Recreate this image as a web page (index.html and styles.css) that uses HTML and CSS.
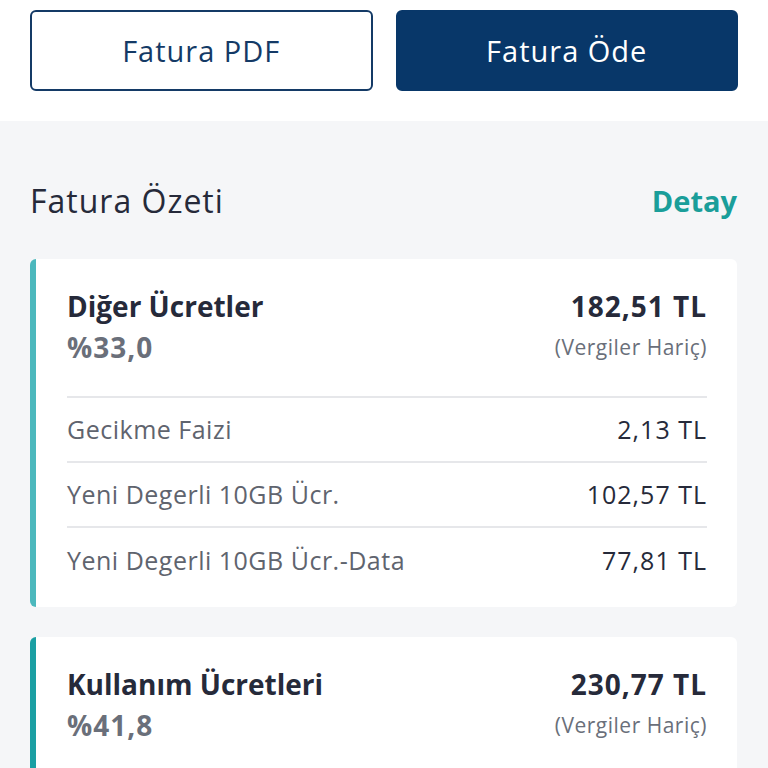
FILE: index.html
```html
<!DOCTYPE html>
<html>
    <head>
        <meta charset="utf-8">
        <link rel="stylesheet" href="styles.css">
    </head>
    <body>
        <div class="actions">
            <button class="btn btn-outline">Fatura PDF</button>
            <button class="btn btn-fill">Fatura Öde</button>
        </div>
        <div class="summary">
            <div class="summary-head">
                <div class="summary-title">Fatura Özeti</div>
                <div class="summary-link">Detay</div>
            </div>
            <div class="card">
                <div class="card-head">
                    <div>
                        <div class="card-title">Diğer Ücretler</div>
                        <div class="card-percent">%33,0</div>
                    </div>
                    <div class="card-total">
                        <div class="card-amount">182,51 TL</div>
                        <div class="card-note">(Vergiler Hariç)</div>
                    </div>
                </div>
                <div class="row">
                    <span class="row-label">Gecikme Faizi</span>
                    <span class="row-value">2,13 TL</span>
                </div>
                <div class="row">
                    <span class="row-label">Yeni Degerli 10GB Ücr.</span>
                    <span class="row-value">102,57 TL</span>
                </div>
                <div class="row">
                    <span class="row-label">Yeni Degerli 10GB Ücr.-Data</span>
                    <span class="row-value">77,81 TL</span>
                </div>
            </div>
            <div class="card card-dark">
                <div class="card-head">
                    <div>
                        <div class="card-title">Kullanım Ücretleri</div>
                        <div class="card-percent">%41,8</div>
                    </div>
                    <div class="card-total">
                        <div class="card-amount">230,77 TL</div>
                        <div class="card-note">(Vergiler Hariç)</div>
                    </div>
                </div>
            </div>
        </div>
    </body>
</html>
```

FILE: styles.css
```css
body {
    margin: 0;
    background-color: #f5f6f8;
    font-family: "Open Sans", "Noto Sans", sans-serif;
    color: #262a3a;
}
.actions {
    display: grid;
    grid-template-columns: 1fr 1fr;
    gap: 23px;
    padding: 10px 30px 30px 30px;
    background-color: white;
}
.btn {
    height: 81px;
    border-radius: 6px;
    font-family: inherit;
    font-size: 29px;
    letter-spacing: 1px;
    border: 2px solid #143a66;
}
.btn-outline {
    background-color: white;
    color: #143a66;
}
.btn-fill {
    background-color: #083769;
    border-color: #083769;
    color: white;
}
.summary {
    padding: 0 31px 0 30px;
}
.summary-head {
    display: flex;
    justify-content: space-between;
    align-items: center;
    height: 40px;
    padding: 59px 0 39px 0;
}
.summary-title {
    font-size: 32px;
    letter-spacing: 1px;
    color: #262a3a;
}
.summary-link {
    font-size: 29px;
    font-weight: 700;
    color: #1a9e9a;
}
.card {
    background-color: white;
    border-left: 6px solid #4cb8bd;
    border-radius: 6px;
    padding: 0 30px 16px 31px;
    margin-bottom: 30px;
}
.card-dark {
    border-left-color: #1a9fa3;
}
.card-head {
    display: flex;
    justify-content: space-between;
    padding: 27px 0 28px 0;
    border-bottom: 2px solid #e6e7ea;
}
.card-dark .card-head {
    border-bottom: none;
}
.card-title,
.card-amount {
    font-size: 28px;
    font-weight: 700;
    line-height: 40px;
}
.card-amount {
    letter-spacing: 1px;
}
.card-percent {
    font-size: 28px;
    font-weight: 700;
    letter-spacing: 1px;
    color: #6a6f7a;
    line-height: 42px;
}
.card-total {
    text-align: right;
}
.card-note {
    font-size: 21px;
    letter-spacing: 0.5px;
    color: #6a6f7a;
    line-height: 42px;
}
.row {
    display: flex;
    justify-content: space-between;
    align-items: center;
    box-sizing: border-box;
    height: 65px;
    padding-bottom: 2px;
    font-size: 25px;
    border-bottom: 2px solid #e6e7ea;
}
.row:last-child {
    height: 63px;
    padding-bottom: 0;
    border-bottom: none;
}
.row-label {
    color: #5f646e;
    letter-spacing: 0.5px;
}
.row-value {
    color: #262a3a;
    letter-spacing: 1px;
}
```
